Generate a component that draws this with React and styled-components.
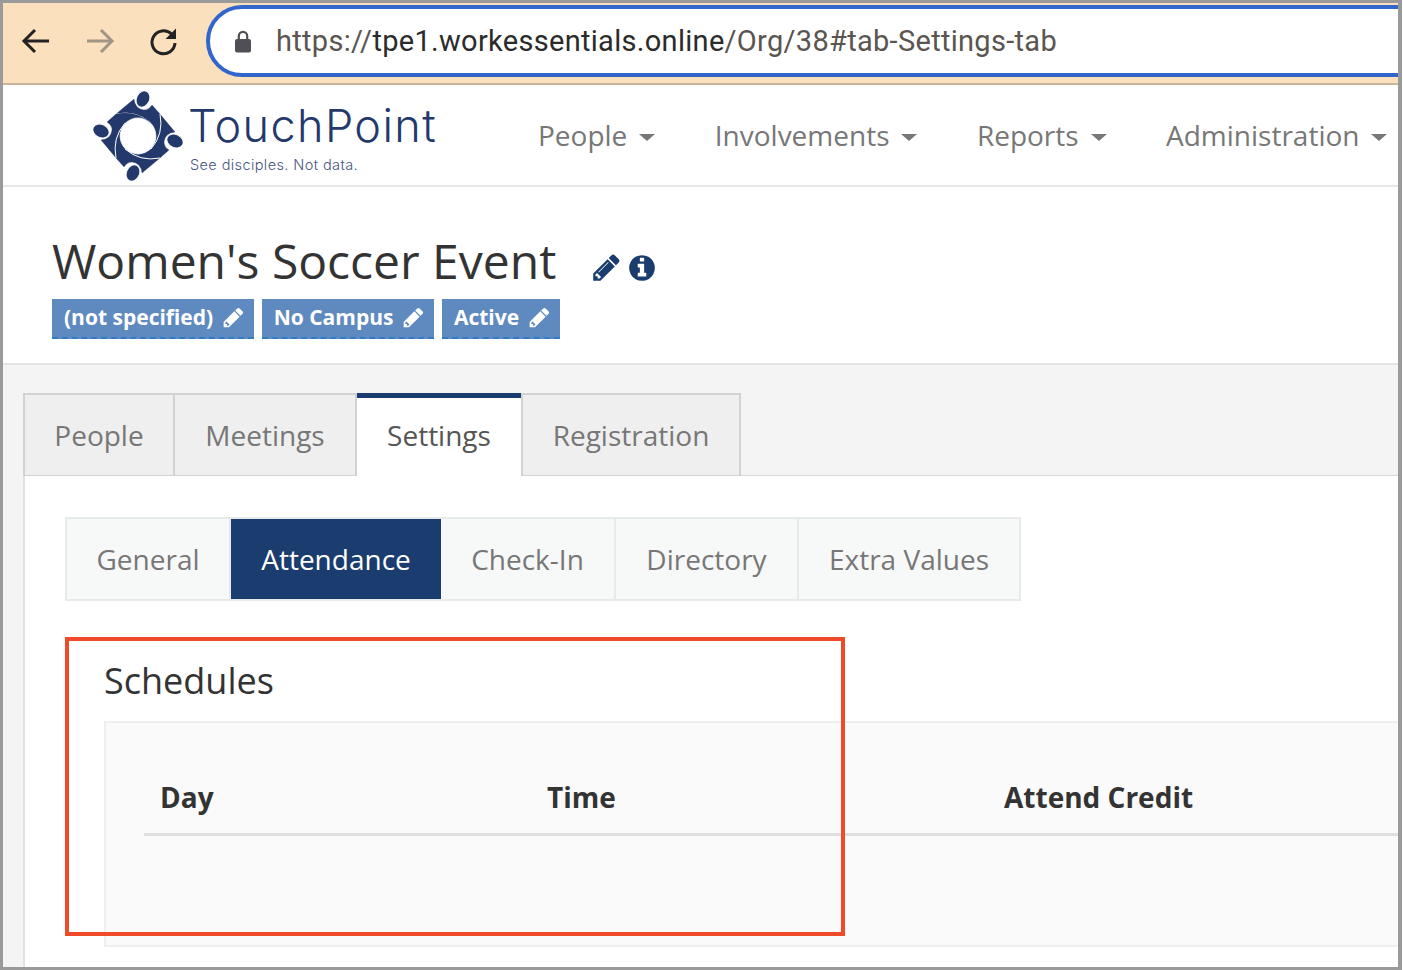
import React from 'react';
import styled, { createGlobalStyle } from 'styled-components';

const GlobalStyle = createGlobalStyle`
  html, body {
    margin: 0;
    padding: 0;
    background: #fff;
    overflow: hidden;
  }
  * {
    box-sizing: border-box;
  }
`

const Frame = styled.div`
  position: relative;
  width: 1402px;
  height: 970px;
  border: 3px solid #9a9a9a;
  border-right-width: 4px;
  overflow: hidden;
  font-family: "Open Sans", "Noto Sans", sans-serif;
  color: #333;
`

const Toolbar = styled.div`
  height: 82px;
  display: flex;
  align-items: center;
  background: #fbe0bd;
  border-bottom: 2px solid #c9b49a;
  padding: 0 0 4px 17px;
`

const NavButton = styled.div`
  width: 32px;
  height: 32px;
  margin-right: ${props => props.gap}px;
  svg {
    display: block;
  }
`

const AddressBar = styled.div`
  flex: none;
  width: 1300px;
  height: 72px;
  display: flex;
  align-items: center;
  gap: 25px;
  background: #fff;
  border: 4px solid #3366cc;
  border-radius: 36px;
  padding-left: 25px;
  font-family: Roboto, "Liberation Sans", sans-serif;
  font-size: 29px;
  letter-spacing: 0.3px;
  color: #2b2b2b;
`

const Scheme = styled.span`
  color: #5a5550;
`

const Header = styled.div`
  height: 102px;
  display: flex;
  align-items: center;
  background: #fff;
  border-bottom: 2px solid #e6e6e6;
  padding-left: 89px;
`

const Brand = styled.div`
  display: flex;
  align-items: center;
  width: 446px;
  flex: none;
`

const LogoWrap = styled.div`
  width: 90px;
  height: 90px;
  margin: 1px 0 0 1px;
  svg {
    display: block;
  }
`

const BrandText = styled.div`
  margin-left: 5px;
  color: #24396b;
`

const BrandName = styled.div`
  font-family: Inter, "Liberation Sans", sans-serif;
  font-weight: 300;
  font-size: 45px;
  letter-spacing: 1.4px;
  line-height: 50px;
  margin-top: 4px;
`

const BrandTag = styled.div`
  font-family: Inter, "Liberation Sans", sans-serif;
  font-size: 14.5px;
  font-weight: 300;
  letter-spacing: 0.4px;
  line-height: 18px;
  margin: 5px 0 0 2px;
  color: #46557f;
`

const MainNav = styled.nav`
  display: flex;
  align-items: center;
  gap: 59.4px;
`

const NavItem = styled.div`
  display: flex;
  align-items: center;
  gap: 12px;
  font-size: 28px;
  line-height: 40px;
  color: #777;
  white-space: nowrap;
`

const Caret = styled.span`
  width: 0;
  height: 0;
  margin-top: 5px;
  border-left: 8px solid transparent;
  border-right: 8px solid transparent;
  border-top: 7px solid #777;
`

const TitleArea = styled.div`
  height: 178px;
  background: #fff;
  border-bottom: 2px solid #e4e4e4;
  padding: 45px 0 0 49px;
`

const TitleRow = styled.div`
  display: flex;
  align-items: center;
  height: 58px;
`

const Title = styled.h1`
  margin: 0;
  font-size: 48px;
  font-weight: 400;
  line-height: 58px;
  color: #333;
  white-space: nowrap;
`

const TitleIcons = styled.div`
  display: flex;
  align-items: center;
  gap: 5px;
  margin: 13px 0 0 35px;
  color: #1a3c6e;
  svg {
    display: block;
  }
`

const TagRow = styled.div`
  display: flex;
  gap: 7.5px;
  margin-top: 9px;
`

const Tag = styled.div`
  height: 40px;
  display: flex;
  align-items: center;
  gap: 9px;
  padding: 0 9px 2px 12px;
  background: #5f8ac0;
  border-bottom: 2px dashed #2f7cc4;
  color: #fff;
  font-size: 21px;
  font-weight: 700;
  white-space: nowrap;
`

const Body = styled.div`
  height: 603px;
  background: #f4f4f4;
  padding: 28px 0 0 20px;
`

const TabRow = styled.div`
  display: flex;
  height: 84px;
`

const Tab = styled.div`
  width: ${props => props.width}px;
  display: flex;
  align-items: center;
  justify-content: center;
  font-size: 28px;
  background: ${props => props.active ? '#fff' : '#efefef'};
  color: ${props => props.active ? '#555' : '#777'};
  border: 2px solid #d2d2d2;
  border-left-width: ${props => props.divided ? 2 : 0}px;
  ${props => props.active && `
    border: 0;
    border-top: 5px solid #1a3c6e;
    padding-bottom: 5px;
    position: relative;
    z-index: 1;
  `}
`

const TabFiller = styled.div`
  flex: 1;
  border-bottom: 2px solid #d9d9d9;
`

const Panel = styled.div`
  position: relative;
  height: 520px;
  margin-top: -1px;
  background: #fff;
  border-left: 2px solid #e2e2e2;
  padding: 41px 0 0 40px;
`

const SubTabs = styled.div`
  display: inline-flex;
  height: 84px;
  background: #f7f8f8;
  border: 2px solid #e7eaea;
`

const SubTab = styled.div`
  width: ${props => props.width}px;
  display: flex;
  align-items: center;
  justify-content: center;
  font-size: 28px;
  background: ${props => props.active ? '#1a3c6e' : 'transparent'};
  color: ${props => props.active ? '#fff' : '#777'};
  border-right: ${props => props.last || props.active ? 0 : 2}px solid #e7eaea;
`

const SectionTitle = styled.h2`
  margin: 56px 0 0 39px;
  font-size: 36px;
  font-weight: 400;
  line-height: 48px;
  color: #333;
`

const TableBox = styled.div`
  margin: 16px 0 0 39px;
  width: 1340px;
  height: 226px;
  background: #fafafa;
  border: 2px solid #eee;
  padding: 55px 0 0 38px;
`

const HeadRow = styled.div`
  display: grid;
  grid-template-columns: 387px 457px 1fr;
  height: 38px;
  box-sizing: content-box;
  padding: 0 0 17px 16px;
  border-bottom: 3px solid #dedede;
  font-size: 28px;
  line-height: 38px;
  font-weight: 700;
  color: #333;
`

// the red annotation drawn on top of the screenshot
const Highlight = styled.div`
  position: absolute;
  left: 40px;
  top: 161px;
  width: 780px;
  height: 299px;
  border: 4px solid #ef4b2b;
  pointer-events: none;
`

const BackIcon = ({ color }) => (
  <svg width="32" height="32" viewBox="0 0 32 32" fill="none" stroke={color} strokeWidth="3">
    <path d="M29 16H4" />
    <path d="M15 5 4 16l11 11" />
  </svg>
)

const ForwardIcon = ({ color }) => (
  <svg width="32" height="32" viewBox="0 0 32 32" fill="none" stroke={color} strokeWidth="3">
    <path d="M3 16h25" />
    <path d="M17 5l11 11-11 11" />
  </svg>
)

const ReloadIcon = () => (
  <svg width="32" height="32" viewBox="0 0 32 32" fill="none">
    <path d="M23.5 9A11.5 11.5 0 1 0 27 18" stroke="#222" strokeWidth="3" />
    <path d="M28 3.5V14H17.5z" fill="#222" />
  </svg>
)

const LockIcon = () => (
  <svg width="16" height="24" viewBox="0 0 16 24" fill="none">
    <path d="M3.8 11V7a4.2 4.2 0 0 1 8.4 0v4" stroke="#4f4f55" strokeWidth="2.2" />
    <rect x="0" y="10" width="16" height="13.5" rx="2" fill="#4f4f55" />
  </svg>
)

const pencilTip = "M491 1536l91-91-235-235-91 91v107h128v128h107z"
const pencilSlit = "M1014 608q0-22-22-22-10 0-17 7l-542 542q-7 7-7 17 0 22 22 22 10 0 17-7l542-542q7-7 7-17z"
const pencilBody = "M960 416l416 416-832 832h-416v-416zm683 96q0 53-37 90l-166 166-416-416 166-165q36-38 90-38 53 0 91 38l235 234q37 39 37 91z"

const PencilIcon = ({ size, plain }) => (
  <svg width={size} height={size} viewBox="0 0 1792 1792" fill="currentColor">
    <path d={`${pencilTip}${plain ? '' : pencilSlit}${pencilBody}`} />
  </svg>
)

const InfoIcon = ({ size }) => (
  <svg width={size} height={size} viewBox="0 0 1792 1792" fill="currentColor">
    <path d="M1152 1376v-160q0-14-9-23t-23-9h-96v-512q0-14-9-23t-23-9h-320q-14 0-23 9t-9 23v160q0 14 9 23t23 9h96v320h-96q-14 0-23 9t-9 23v160q0 14 9 23t23 9h448q14 0 23-9t9-23zm-128-896v-160q0-14-9-23t-23-9h-192q-14 0-23 9t-9 23v160q0 14 9 23t23 9h192q14 0 23-9t9-23zm640 416q0 209-103 385.5t-279.5 279.5-385.5 103-385.5-103-279.5-279.5-103-385.5 103-385.5 279.5-279.5 385.5-103 385.5 103 279.5 279.5 103 385.5z" />
  </svg>
)

// one person of the ring, repeated four times around the middle
const figure = "M-22 -22 L-4 -37 Q-3 -27 6 -26 Q11 -26 14 -31 L22 -22 Q26 -2 13 13 A18.4 18.4 0 0 0 13 -13 Q-2 -26 -22 -22Z"

const LogoMark = () => (
  <svg width="90" height="90" viewBox="-45 -45 90 90">
    {[0, 90, 180, 270].map(angle => (
      <g key={angle} transform={`rotate(${angle})`}>
        <path d={figure} fill="#24396b" stroke="#24396b" strokeWidth="0.3" />
        <path d="M-22 -22 Q-2 -26 13 -13" fill="none" stroke="#fff" strokeWidth="1" />
        <ellipse cx="5" cy="-37" rx="6.5" ry="8.5" transform="rotate(25 5 -37)" fill="#24396b" stroke="#fff" strokeWidth="1" />
      </g>
    ))}
  </svg>
)

const App = () => {
  const navItems = ['People', 'Involvements', 'Reports', 'Administration']
  const tags = ['(not specified)', 'No Campus', 'Active']

  return (<Frame>
    <GlobalStyle />
    <Toolbar>
      <NavButton gap={32}><BackIcon color="#222" /></NavButton>
      <NavButton gap={32}><ForwardIcon color="#a09484" /></NavButton>
      <NavButton gap={26}><ReloadIcon /></NavButton>
      <AddressBar>
        <LockIcon />
        <span><Scheme>https://</Scheme>tpe1.workessentials.online<Scheme>/Org/38#tab-Settings-tab</Scheme></span>
      </AddressBar>
    </Toolbar>
    <Header>
      <Brand>
        <LogoWrap><LogoMark /></LogoWrap>
        <BrandText>
          <BrandName>TouchPoint</BrandName>
          <BrandTag>See disciples. Not data.</BrandTag>
        </BrandText>
      </Brand>
      <MainNav>
        {navItems.map(item => <NavItem key={item}>{item}<Caret /></NavItem>)}
      </MainNav>
    </Header>
    <TitleArea>
      <TitleRow>
        <Title>Women's Soccer Event</Title>
        <TitleIcons>
          <PencilIcon size={31} />
          <InfoIcon size={30} />
        </TitleIcons>
      </TitleRow>
      <TagRow>
        {tags.map(tag => <Tag key={tag}>{tag}<PencilIcon size={23} plain /></Tag>)}
      </TagRow>
    </TitleArea>
    <Body>
      <TabRow>
        <Tab width={152} divided>People</Tab>
        <Tab width={182}>Meetings</Tab>
        <Tab width={164} active>Settings</Tab>
        <Tab width={220} divided>Registration</Tab>
        <TabFiller />
      </TabRow>
      <Panel>
        <SubTabs>
          <SubTab width={164}>General</SubTab>
          <SubTab width={210} active>Attendance</SubTab>
          <SubTab width={175}>Check-In</SubTab>
          <SubTab width={183}>Directory</SubTab>
          <SubTab width={220} last>Extra Values</SubTab>
        </SubTabs>
        <SectionTitle>Schedules</SectionTitle>
        <TableBox>
          <HeadRow>
            <div>Day</div>
            <div>Time</div>
            <div>Attend Credit</div>
          </HeadRow>
        </TableBox>
        <Highlight />
      </Panel>
    </Body>
  </Frame>);
}

export default App;
